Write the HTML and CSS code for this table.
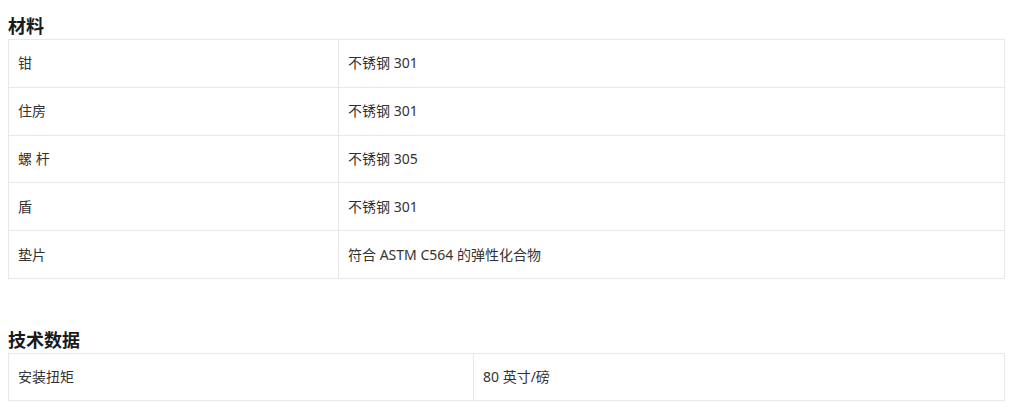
FILE: index.html
```html
<!DOCTYPE html>
<html lang="zh-CN">
<head>
<meta charset="utf-8">
<link rel="stylesheet" href="styles.css">
</head>
<body>
<section class="spec">
  <h3 class="spec-title">材料</h3>
  <table class="spec-table">
    <colgroup><col class="col-a1"><col></colgroup>
    <tr><td>钳</td><td>不锈钢 301</td></tr>
    <tr><td>住房</td><td>不锈钢 301</td></tr>
    <tr><td>螺 杆</td><td>不锈钢 305</td></tr>
    <tr><td>盾</td><td>不锈钢 301</td></tr>
    <tr><td>垫片</td><td>符合 ASTM C564 的弹性化合物</td></tr>
  </table>
</section>
<section class="spec spec-second">
  <h3 class="spec-title">技术数据</h3>
  <table class="spec-table spec-table-tech">
    <colgroup><col class="col-b1"><col></colgroup>
    <tr><td>安装扭矩</td><td>80 英寸/磅</td></tr>
  </table>
</section>
</body>
</html>
```
FILE: styles.css
```css
html, body {
  background: #ffffff;
}
body {
  margin: 8px;
  font-family: "Noto Sans", "Noto Sans CJK SC", sans-serif;
  color: #333333;
  font-size: 14px;
}
.spec-title {
  margin: 6px 0 0 0;
  font-size: 18px;
  line-height: 25px;
  font-weight: 700;
  color: #1a1a1a;
}
.spec-second {
  margin-top: 49px;
}
.spec-table {
  width: 997px;
  border-collapse: collapse;
  table-layout: fixed;
}
.spec-table td {
  border: 1px solid #e8e8e8;
  height: 47.8px;
  padding: 0 9px;
  vertical-align: middle;
  box-sizing: border-box;
  line-height: 20px;
}
.col-a1 { width: 330px; }
.col-b1 { width: 465px; }
.spec-table-tech td { height: 47px; }
```
